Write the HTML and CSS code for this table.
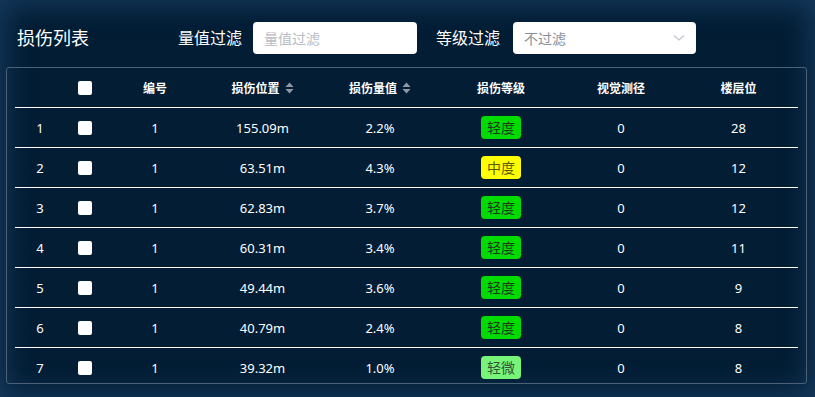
FILE: index.html
```html
<!DOCTYPE html>
<html lang="zh">
<head>
<meta charset="utf-8">
<link rel="stylesheet" href="styles.css">
</head>
<body>
<div class="page">
  <div class="topbar">
    <div class="title">损伤列表</div>
    <div class="filter filter-value">
      <span class="label">量值过滤</span>
      <div class="input"><span class="placeholder">量值过滤</span></div>
    </div>
    <div class="filter filter-level">
      <span class="label">等级过滤</span>
      <div class="select">
        <span class="select-text">不过滤</span>
        <svg class="chevron" width="12" height="8" viewBox="0 0 12 8"><path d="M1 1.5 L6 6 L11 1.5" fill="none" stroke="#c0c4cc" stroke-width="1.2"/></svg>
      </div>
    </div>
  </div>
  <div class="table-box">
    <div class="table">
      <div class="row head">
        <div class="c c1"></div>
        <div class="c c2"><span class="cb"></span></div>
        <div class="c c3">编号</div>
        <div class="c c4">损伤位置<svg class="sort" width="9" height="12" viewBox="0 0 9 12"><path d="M4.5 0.5 L8.5 5 L0.5 5 Z M0.5 7 L8.5 7 L4.5 11.5 Z" fill="#8e9aa6"/></svg></div>
        <div class="c c5">损伤量值<svg class="sort" width="9" height="12" viewBox="0 0 9 12"><path d="M4.5 0.5 L8.5 5 L0.5 5 Z M0.5 7 L8.5 7 L4.5 11.5 Z" fill="#8e9aa6"/></svg></div>
        <div class="c c6">损伤等级</div>
        <div class="c c7">视觉测径</div>
        <div class="c c8">楼层位</div>
      </div>
      <div class="row">
        <div class="c c1">1</div><div class="c c2"><span class="cb"></span></div><div class="c c3">1</div><div class="c c4">155.09m</div><div class="c c5">2.2%</div><div class="c c6"><span class="badge light">轻度</span></div><div class="c c7">0</div><div class="c c8">28</div>
      </div>
      <div class="row">
        <div class="c c1">2</div><div class="c c2"><span class="cb"></span></div><div class="c c3">1</div><div class="c c4">63.51m</div><div class="c c5">4.3%</div><div class="c c6"><span class="badge mid">中度</span></div><div class="c c7">0</div><div class="c c8">12</div>
      </div>
      <div class="row">
        <div class="c c1">3</div><div class="c c2"><span class="cb"></span></div><div class="c c3">1</div><div class="c c4">62.83m</div><div class="c c5">3.7%</div><div class="c c6"><span class="badge light">轻度</span></div><div class="c c7">0</div><div class="c c8">12</div>
      </div>
      <div class="row">
        <div class="c c1">4</div><div class="c c2"><span class="cb"></span></div><div class="c c3">1</div><div class="c c4">60.31m</div><div class="c c5">3.4%</div><div class="c c6"><span class="badge light">轻度</span></div><div class="c c7">0</div><div class="c c8">11</div>
      </div>
      <div class="row">
        <div class="c c1">5</div><div class="c c2"><span class="cb"></span></div><div class="c c3">1</div><div class="c c4">49.44m</div><div class="c c5">3.6%</div><div class="c c6"><span class="badge light">轻度</span></div><div class="c c7">0</div><div class="c c8">9</div>
      </div>
      <div class="row">
        <div class="c c1">6</div><div class="c c2"><span class="cb"></span></div><div class="c c3">1</div><div class="c c4">40.79m</div><div class="c c5">2.4%</div><div class="c c6"><span class="badge light">轻度</span></div><div class="c c7">0</div><div class="c c8">8</div>
      </div>
      <div class="row">
        <div class="c c1">7</div><div class="c c2"><span class="cb"></span></div><div class="c c3">1</div><div class="c c4">39.32m</div><div class="c c5">1.0%</div><div class="c c6"><span class="badge slight">轻微</span></div><div class="c c7">0</div><div class="c c8">8</div>
      </div>
    </div>
  </div>
</div>
</body>
</html>
```
FILE: styles.css
```css
* { box-sizing: border-box; }
html, body { margin: 0; padding: 0; }
body {
  width: 815px;
  height: 397px;
  overflow: hidden;
  background: #031c33;
  font-family: "Noto Sans", "Noto Sans CJK SC", sans-serif;
  color: #ffffff;
}
.page {
  width: 815px;
  height: 397px;
  background: #021d34;
  box-shadow: inset 0 0 28px 6px #16395c;
  padding: 22px 0 0 0;
}
.topbar {
  display: flex;
  align-items: center;
  height: 32px;
  padding-left: 17px;
}
.title {
  font-size: 18px;
  width: 161px;
  line-height: 32px;
}
.filter { display: flex; align-items: center; }
.label { font-size: 16px; line-height: 32px; }
.filter-value .label { margin-right: 11px; }
.filter-level { margin-left: 19px; }
.filter-level .label { margin-right: 13px; }
.input {
  width: 164px;
  height: 32px;
  background: #fff;
  border-radius: 4px;
  padding-left: 11px;
  display: flex;
  align-items: center;
}
.placeholder { color: #b8bcc4; font-size: 14px; }
.select {
  width: 183px;
  height: 32px;
  background: #fff;
  border-radius: 4px;
  padding: 0 11px;
  display: flex;
  align-items: center;
  justify-content: space-between;
}
.select-text { color: #8a8f99; font-size: 14px; }
.chevron { margin-right: 0; }
.table-box {
  margin: 13px 0 0 6px;
  width: 801px;
  height: 317px;
  border: 1px solid #4b6276;
  border-radius: 3px;
  padding: 0 8px;
  overflow: hidden;
}
.row {
  display: flex;
  height: 40px;
  border-bottom: 1px solid #ffffff;
  font-size: 13px;
}
.row.head {
  font-size: 12px;
  font-weight: bold;
}
.c {
  display: flex;
  align-items: center;
  justify-content: center;
}
.c1 { width: 50px; }
.c2 { width: 40px; }
.c3 { width: 100px; }
.c4 { width: 115px; }
.c5 { width: 120px; }
.c6 { width: 122px; }
.c7 { width: 118px; }
.c8 { width: 117px; }
.cb {
  width: 14px;
  height: 14px;
  background: #fff;
  border-radius: 2px;
}
.sort { margin-left: 5px; }
.badge {
  display: inline-block;
  width: 40px;
  height: 23px;
  line-height: 23px;
  text-align: center;
  border-radius: 4px;
  font-size: 14px;
  color: #1f3a1f;
}
.badge.light { background: #00dc00; }
.badge.mid { background: #ffff00; color: #5a5a00; }
.badge.slight { background: #78f578; color: #33553a; }
```
